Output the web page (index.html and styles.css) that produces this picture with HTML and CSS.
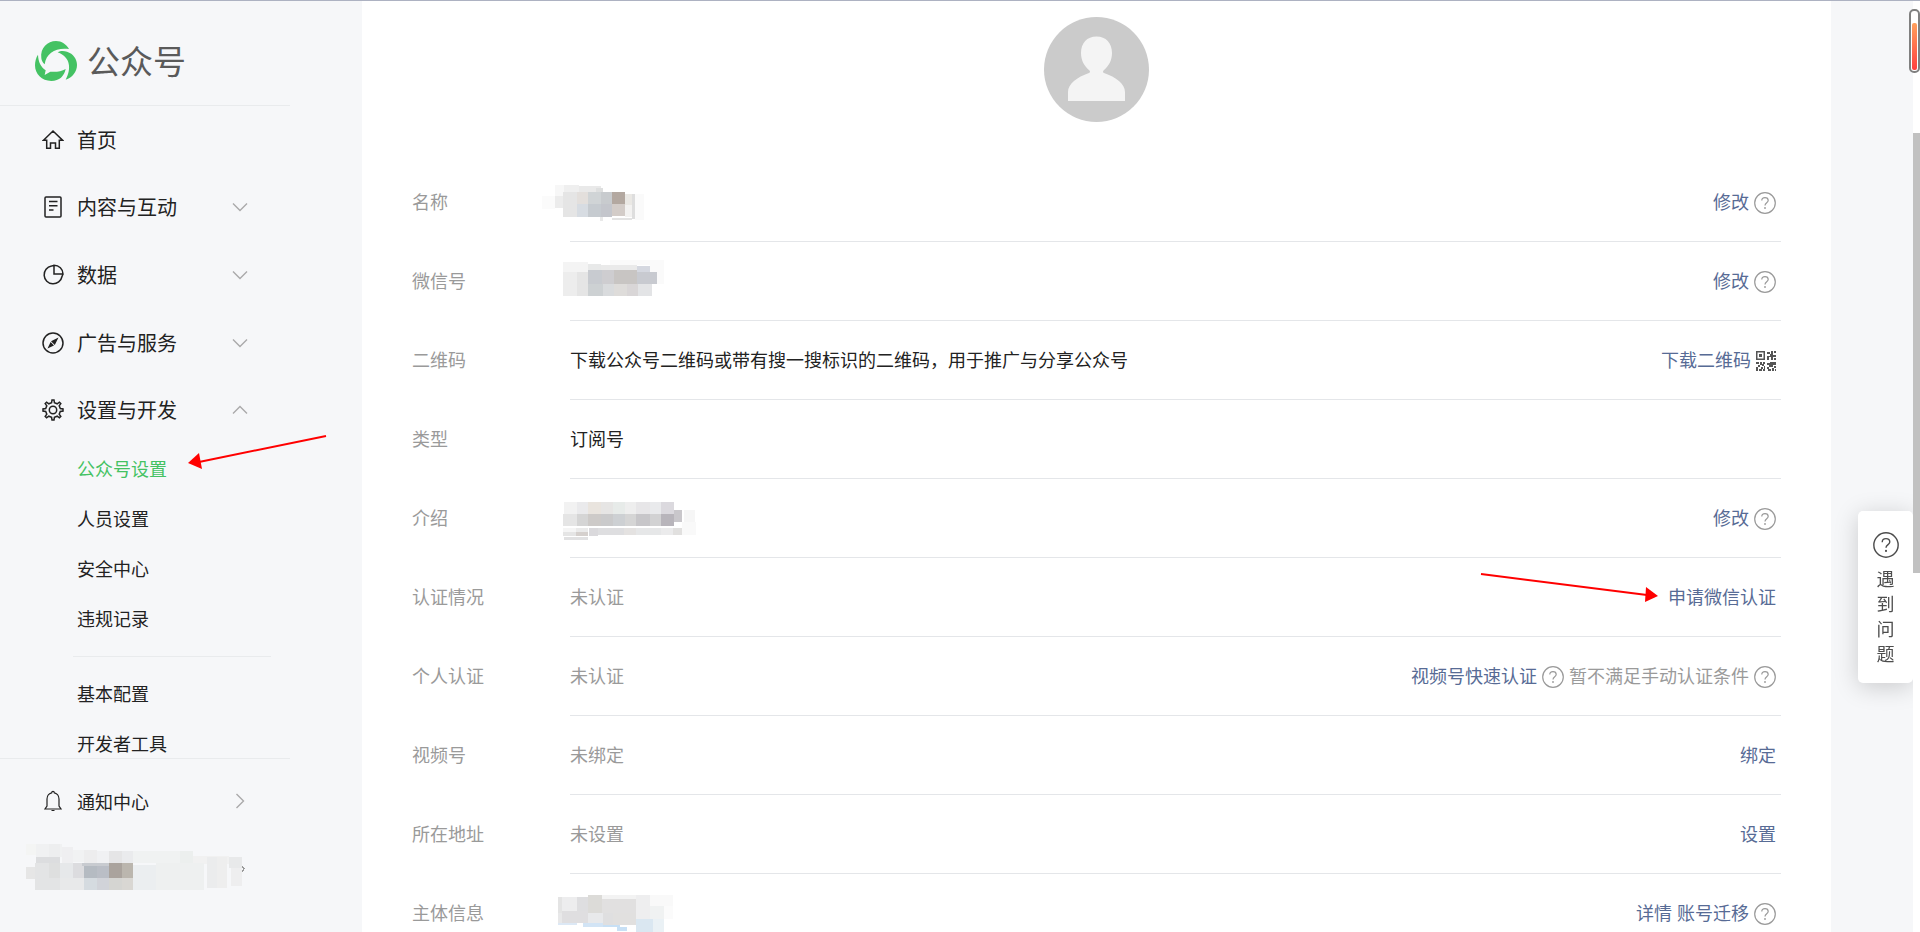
FILE: index.html
```html
<!DOCTYPE html>
<html lang="zh-CN">
<head>
    <meta charset="UTF-8">
    <meta name="viewport" content="width=device-width, initial-scale=1.0">
    <title>公众号</title>
    <link rel="stylesheet" href="styles.css">
</head>
<body>
    <svg class="sprite" aria-hidden="true">
        <symbol id="icon-help" viewBox="0 0 22 22">
            <circle cx="11" cy="11" r="10.3" fill="none" stroke="currentColor" stroke-width="1.2"/>
            <path d="M7.8 8.6C7.8 4.6 14.2 4.7 14.2 8.5C14.2 10.7 11 10.7 11 13.4" fill="none" stroke="currentColor" stroke-width="1.2"/>
            <circle cx="11" cy="16" r="0.9" fill="currentColor"/>
        </symbol>
        <symbol id="icon-arrow" viewBox="0 0 16 16">
            <path d="M1 4.500L8 11.500L15 4.500" fill="none" stroke="currentColor" stroke-width="1.4"/>
        </symbol>
    </svg>

    <aside class="sidebar">
        <div class="logo">
            <svg class="logo-icon" viewBox="105 123 126 120" fill="#44c263">
                <path d="M124 175C120 143 143 123 168 123C185 123 199 133 207 147C168 142 139 158 134 193C128 188 125 182 124 175Z"/>
                <path d="M173 157C181 152 191 152 201 155C220 161 231 177 231 195C231 215 217 233 197 239C214 208 213 172 173 157Z"/>
                <path d="M114 164C115 186 122 200 137 211L134 225L151 215C168 217 184 214 197 207C193 228 178 243 154 243C125 243 105 222 105 196C105 184 108 173 114 164Z"/>
            </svg>
            <span>公众号</span>
        </div>

        <nav class="nav">
            <div class="menu">
                <button class="menu-item">
                    <svg class="icon" viewBox="0 0 22 22"><path d="M1.500 11.200L11 2L20.500 11.200H17.300V19.300H13.500V14H8.500V19.300H4.700V11.200Z"/></svg>
                    <span>首页</span>
                </button>
                <button class="menu-item">
                    <svg class="icon" viewBox="0 0 22 22"><rect x="3" y="1" width="16" height="20" rx="1"/><path d="M7 5.500H15.500M7 9.700H15.500M7 14H11.500"/></svg>
                    <span>内容与互动</span>
                    <svg class="arrow"><use href="#icon-arrow"/></svg>
                </button>
                <button class="menu-item">
                    <svg class="icon" viewBox="0 0 22 22"><path d="M9.500 2A9 9 0 1 0 20 12.500M12 1.200V10H21C21 5 17 1.200 12 1.200ZM9.500 2L12 1.500M20 12.500L21 10"/></svg>
                    <span>数据</span>
                    <svg class="arrow"><use href="#icon-arrow"/></svg>
                </button>
                <button class="menu-item">
                    <svg class="icon" viewBox="0 0 22 22"><circle cx="11" cy="11" r="10"/><path d="M16.500 5.500L12.800 13L9 9.200ZM5.500 16.500L8.600 10L12 13.400Z" fill="#222" stroke="none"/></svg>
                    <span>广告与服务</span>
                    <svg class="arrow"><use href="#icon-arrow"/></svg>
                </button>
                <button class="menu-item">
                    <svg class="icon" viewBox="0 0 22 22"><circle cx="11" cy="11" r="3.700"/><path d="M9.600 3.700L10 1H12L12.400 3.700L15.200 4.800L17.400 3.200L18.800 4.600L17.200 6.800L18.300 9.600L21 10V12L18.300 12.400L17.200 15.200L18.800 17.400L17.400 18.800L15.200 17.200L12.400 18.300L12 21H10L9.600 18.300L6.800 17.200L4.600 18.800L3.200 17.400L4.800 15.200L3.700 12.400L1 12V10L3.700 9.600L4.800 6.800L3.200 4.600L4.600 3.200L6.800 4.800Z"/></svg>
                    <span>设置与开发</span>
                    <svg class="arrow up"><use href="#icon-arrow"/></svg>
                </button>
            </div>
            <ul class="submenu">
                <li><a href="#" class="active">公众号设置</a></li>
                <li><a href="#">人员设置</a></li>
                <li><a href="#">安全中心</a></li>
                <li><a href="#">违规记录</a></li>
            </ul>
            <hr>
            <ul class="submenu">
                <li><a href="#">基本配置</a></li>
                <li><a href="#">开发者工具</a></li>
            </ul>
        </nav>

        <div class="sidebar-footer">
            <button class="menu-item notice">
                <svg class="icon" viewBox="0 0 22 22"><path d="M3 19H19L17 16V9C17 5.500 14.500 3.200 12.300 2.800C12.300 1 9.700 1 9.700 2.800C7.500 3.200 5 5.500 5 9V16ZM9.500 20.500H12.500"/></svg>
                <span>通知中心</span>
                <svg class="arrow right"><use href="#icon-arrow"/></svg>
            </button>
            <!-- account name, masked -->
            <svg class="account" viewBox="78 666 663 147" shape-rendering="crispEdges">
                <path d="M726 736L733 743L726 751" fill="none" stroke="#999" stroke-width="4"/>
                <path d="M78 669H108V703H78Z" fill="#f4f5f4"/>
                <path d="M108 669H186V709H108Z" fill="#f0f1f2"/>
                <path d="M148 669H180V709H148Z" fill="#edeeef"/>
                <path d="M186 678H219V726H186Z" fill="#efeff1"/>
                <path d="M219 688H252V724H219Z" fill="#f1f2f3"/>
                <path d="M252 687H292V726H252Z" fill="#ededee"/>
                <path d="M292 690H327V726H292Z" fill="#f0f1f3"/>
                <path d="M327 690H366V727H327Z" fill="#e5e5e6"/>
                <path d="M366 690H399V727H366Z" fill="#eaebed"/>
                <path d="M399 690H540V727H399Z" fill="#f0f2f2"/>
                <path d="M540 690H579V727H540Z" fill="#ecefee"/>
                <path d="M579 706H687V730H579Z" fill="#f1f1f1"/>
                <path d="M78 738H108V774H78Z" fill="#e6e6e6"/>
                <path d="M108 709H180V727H108Z" fill="#dcdddf"/>
                <path d="M104 727H180V806H104Z" fill="#e3e4e5"/>
                <path d="M148 727H180V770H148Z" fill="#dedfdf"/>
                <path d="M180 727H219V770H180Z" fill="#e6e8ea"/>
                <path d="M219 727H252V770H219Z" fill="#dcdcdf"/>
                <path d="M180 770H252V806H180Z" fill="#e8e9ea"/>
                <path d="M245 727H327V735H245Z" fill="#c8cbd0"/>
                <path d="M252 735H292V770H252Z" fill="#b5bbc2"/>
                <path d="M292 735H327V770H292Z" fill="#babec6"/>
                <path d="M252 770H292V808H252Z" fill="#d5dbe0"/>
                <path d="M292 770H327V808H292Z" fill="#d1d3d9"/>
                <path d="M327 727H366V770H327Z" fill="#aaa39d"/>
                <path d="M366 727H399V770H366Z" fill="#bbb6ae"/>
                <path d="M327 770H366V806H327Z" fill="#d5d5d2"/>
                <path d="M366 770H399V806H366Z" fill="#d9d7d3"/>
                <path d="M399 733H468V806H399Z" fill="#ebeef0"/>
                <path d="M468 727H612V806H468Z" fill="#eef0f0"/>
                <path d="M620 709H651V800H620Z" fill="#ebeced"/>
                <path d="M651 709H681V800H651Z" fill="#eeeeee"/>
                <path d="M687 709H726V740H687Z" fill="#e8e9ea"/>
                <path d="M693 740H726V796H693Z" fill="#eeeeef"/>
            </svg>
        </div>

        <svg class="pointer pointer-menu" viewBox="0 0 142 38">
            <path d="M139 2L12 28" stroke="#f00" stroke-width="2"/>
            <path d="M1 29L12 19L15 35Z" fill="#f00"/>
        </svg>
    </aside>

    <main class="main">
        <div class="panel">
            <svg class="avatar" viewBox="0 0 105 105">
                <circle cx="52.500" cy="52.500" r="52.500" fill="#cbcbcb"/>
                <path d="M52.500 19.500C62 19.500 68 26 68 36C68 43 65 49 59.500 53.500C58.500 55 59 55.500 60 56C72 60 81 67 81 75V84H24V75C24 67 33 60 45 56C46 55.500 46.500 55 45.500 53.500C40 49 37 43 37 36C37 26 43 19.500 52.500 19.500Z" fill="#f4f4f4"/>
            </svg>

            <ul class="settings">
                <li class="row">
                    <span class="label">名称</span>
                    <div class="content">
                        <svg class="mosaic" viewBox="486 54 480 144" shape-rendering="crispEdges">
                            <path d="M486 111H525V150H486Z" fill="#fbfbfb"/>
                            <path d="M525 77H552V111H525Z" fill="#f7f7f7"/>
                            <path d="M525 111H549V148H525Z" fill="#ececec"/>
                            <path d="M552 77H597V99H552Z" fill="#efefef"/>
                            <path d="M597 81H663V99H597Z" fill="#e9e9e9"/>
                            <path d="M648 87H669V99H648Z" fill="#dedfdf"/>
                            <path d="M549 99H591V174H549Z" fill="#e5e5e5"/>
                            <path d="M591 99H624V136H591Z" fill="#e3dfdc"/>
                            <path d="M591 136H624V174H591Z" fill="#d7dce2"/>
                            <path d="M624 99H663V136H624Z" fill="#d0d4d6"/>
                            <path d="M624 136H663V174H624Z" fill="#c6cbd0"/>
                            <path d="M663 99H696V136H663Z" fill="#c8cbce"/>
                            <path d="M663 136H696V174H663Z" fill="#c4c6cc"/>
                            <path d="M660 174H668V186H660Z" fill="#e9e9e9"/>
                            <path d="M696 99H735V136H696Z" fill="#b3a8a0"/>
                            <path d="M696 136H735V171H696Z" fill="#d3ccc8"/>
                            <path d="M735 106H756V138H735Z" fill="#eae8e4"/>
                            <path d="M735 138H756V174H735Z" fill="#f3f2f1"/>
                            <path d="M756 106H765V180H756Z" fill="#dedede"/>
                            <path d="M696 177H756V182H696Z" fill="#e3e3e3"/>
                            <path d="M765 106H792V182H765Z" fill="#fafafa"/>
                        </svg>
                    </div>
                    <div class="actions"><a href="#">修改</a><svg class="help"><use href="#icon-help"/></svg></div>
                </li>
                <li class="row">
                    <span class="label">微信号</span>
                    <div class="content">
                        <svg class="mosaic" viewBox="486 291 480 144" shape-rendering="crispEdges">
                            <path d="M549 309H624V339H549Z" fill="#f4f4f4"/>
                            <path d="M549 339H591V412H549Z" fill="#ededed"/>
                            <path d="M591 339H624V412H591Z" fill="#e5e5e5"/>
                            <path d="M624 315H663V333H624Z" fill="#e8e9e9"/>
                            <path d="M663 318H771V333H663Z" fill="#eaeaea"/>
                            <path d="M690 303H852V318H690Z" fill="#fafafa"/>
                            <path d="M810 318H852V376H810Z" fill="#fafafa"/>
                            <path d="M771 322H810V339H771Z" fill="#d5d8e0"/>
                            <path d="M624 333H666V376H624Z" fill="#c8cbd0"/>
                            <path d="M624 376H669V411H624Z" fill="#cdd1d3"/>
                            <path d="M666 333H702V376H666Z" fill="#cecdd0"/>
                            <path d="M669 376H702V412H669Z" fill="#d9dbdd"/>
                            <path d="M702 333H771V376H702Z" fill="#c8c5c3"/>
                            <path d="M702 376H741V411H702Z" fill="#dedcda"/>
                            <path d="M741 376H774V411H741Z" fill="#d9d6d7"/>
                            <path d="M771 339H831V376H771Z" fill="#c8cad0"/>
                            <path d="M774 376H816V412H774Z" fill="#e3e4e6"/>
                        </svg>
                    </div>
                    <div class="actions"><a href="#">修改</a><svg class="help"><use href="#icon-help"/></svg></div>
                </li>
                <li class="row">
                    <span class="label">二维码</span>
                    <div class="content">下载公众号二维码或带有搜一搜标识的二维码，用于推广与分享公众号</div>
                    <div class="actions">
                        <a href="#">下载二维码</a>
                        <svg class="qr" viewBox="0 0 20 20" fill="#555">
                            <path d="M0 0H9V9H0ZM1.500 1.500V7.500H7.500V1.500Z" fill-rule="evenodd"/>
                            <path d="M3 3H6V6H3ZM11 1H14V3H11ZM15 0H17V4H20V6H17V9H15V6H13V9H11V5H14V3H15ZM18 0H20V2H18ZM18 7H20V9H18ZM0 11H3V13H0ZM4 11H6V14H4ZM7 11H9V13H7ZM2 14H4V16H2ZM6 13H8V15H6ZM0 16H2V20H0ZM3 18H6V20H3ZM5 16H7V18H5ZM8 15H9V20H7V18H8ZM11 12H14V14H11ZM14 11H20V14H17V16H13V14H14ZM11 16H13V18H11ZM12 18H15V20H12ZM16 17H18V20H16ZM18 15H20V17H18ZM19 18H20V20H19Z"/>
                        </svg>
                    </div>
                </li>
                <li class="row">
                    <span class="label">类型</span>
                    <div class="content">订阅号</div>
                </li>
                <li class="row">
                    <span class="label">介绍</span>
                    <div class="content">
                        <svg class="mosaic" viewBox="486 72 480 144" shape-rendering="crispEdges">
                            <path d="M552 99H591V136H552Z" fill="#f2f2f2"/>
                            <path d="M591 99H624V136H591Z" fill="#eaeaec"/>
                            <path d="M624 99H663V136H624Z" fill="#e9e4de"/>
                            <path d="M663 99H699V136H663Z" fill="#e6e5e4"/>
                            <path d="M699 99H735V136H699Z" fill="#e7ebe9"/>
                            <path d="M735 99H768V136H735Z" fill="#eeeeee"/>
                            <path d="M768 99H810V136H768Z" fill="#e7e6e8"/>
                            <path d="M810 99H843V136H810Z" fill="#e9eaec"/>
                            <path d="M843 99H882V136H843Z" fill="#dbd9de"/>
                            <path d="M549 136H591V171H549Z" fill="#e5e5e5"/>
                            <path d="M591 136H624V171H591Z" fill="#d5d5d5"/>
                            <path d="M624 136H663V171H624Z" fill="#cdcac8"/>
                            <path d="M663 136H699V171H663Z" fill="#cacacb"/>
                            <path d="M699 136H735V171H699Z" fill="#cdd0d3"/>
                            <path d="M735 136H768V171H735Z" fill="#d5d5d5"/>
                            <path d="M768 136H810V171H768Z" fill="#c7c6c9"/>
                            <path d="M810 136H843V171H810Z" fill="#d2d2d3"/>
                            <path d="M843 136H882V171H843Z" fill="#b8b5bb"/>
                            <path d="M882 123H906V160H882Z" fill="#c9c7cb"/>
                            <path d="M912 123H945V160H912Z" fill="#f6f6f6"/>
                            <path d="M549 178H588V188H549Z" fill="#f5f5f5"/>
                            <path d="M549 189H588V202H549Z" fill="#e5e5e5"/>
                            <path d="M588 178H624V189H588Z" fill="#eaeaea"/>
                            <path d="M588 189H624V202H588Z" fill="#d5d0cd"/>
                            <path d="M552 204H624V214H552Z" fill="#e1e1e2"/>
                            <path d="M627 177H654V201H627Z" fill="#dad9dc"/>
                            <path d="M654 177H732V197H654Z" fill="#dedee0"/>
                            <path d="M732 177H768V197H732Z" fill="#e4e2e1"/>
                            <path d="M768 177H843V197H768Z" fill="#e6e7e8"/>
                            <path d="M843 177H879V197H843Z" fill="#ebebec"/>
                            <path d="M879 177H906V197H879Z" fill="#e1e0df"/>
                            <path d="M906 160H948V198H906Z" fill="#f9f9f9"/>
                        </svg>
                    </div>
                    <div class="actions"><a href="#">修改</a><svg class="help"><use href="#icon-help"/></svg></div>
                </li>
                <li class="row">
                    <span class="label">认证情况</span>
                    <div class="content muted">未认证</div>
                    <div class="actions"><a href="#">申请微信认证</a></div>
                    <svg class="pointer pointer-verify" viewBox="0 0 180 32">
                        <path d="M2 2L168 23" stroke="#f00" stroke-width="2"/>
                        <path d="M179 24L167 15L166 30Z" fill="#f00"/>
                    </svg>
                </li>
                <li class="row">
                    <span class="label">个人认证</span>
                    <div class="content muted">未认证</div>
                    <div class="actions">
                        <a href="#">视频号快速认证</a>
                        <svg class="help"><use href="#icon-help"/></svg>
                        <span class="muted">暂不满足手动认证条件</span>
                        <svg class="help"><use href="#icon-help"/></svg>
                    </div>
                </li>
                <li class="row">
                    <span class="label">视频号</span>
                    <div class="content muted">未绑定</div>
                    <div class="actions"><a href="#">绑定</a></div>
                </li>
                <li class="row">
                    <span class="label">所在地址</span>
                    <div class="content muted">未设置</div>
                    <div class="actions"><a href="#">设置</a></div>
                </li>
                <li class="row">
                    <span class="label">主体信息</span>
                    <div class="content">
                        <svg class="mosaic" viewBox="486 327 480 144" shape-rendering="crispEdges">
                            <path d="M534 354H591V396H534Z" fill="#ededee"/>
                            <path d="M534 354H546V402H534Z" fill="#e4e4e4"/>
                            <path d="M591 354H624V396H591Z" fill="#dedee0"/>
                            <path d="M546 396H624V433H546Z" fill="#dfdee0"/>
                            <path d="M534 402H546V433H534Z" fill="#e8e8e9"/>
                            <path d="M534 433H591V438H534Z" fill="#dce8f5"/>
                            <path d="M624 348H666V402H624Z" fill="#dcdbd8"/>
                            <path d="M624 402H669V433H624Z" fill="#e8e9eb"/>
                            <path d="M608 433H669V444H608Z" fill="#d2e4f5"/>
                            <path d="M666 348H768V360H666Z" fill="#f3f3f3"/>
                            <path d="M666 360H768V402H666Z" fill="#e1e0e0"/>
                            <path d="M669 402H699V438H669Z" fill="#dfdfe0"/>
                            <path d="M699 402H768V438H699Z" fill="#e1e0df"/>
                            <path d="M669 438H720V444H669Z" fill="#c8e0f5"/>
                            <path d="M711 444H740V456H711Z" fill="#c8e0f5"/>
                            <path d="M768 348H810V420H768Z" fill="#eeeeef"/>
                            <path d="M810 348H880V380H810Z" fill="#f9f9f9"/>
                            <path d="M810 380H852V420H810Z" fill="#f0f2f2"/>
                            <path d="M852 380H878V420H852Z" fill="#fbfbfb"/>
                            <path d="M768 420H819V471H768Z" fill="#dae7f1"/>
                            <path d="M819 420H852V471H819Z" fill="#eaf1f5"/>
                        </svg>
                    </div>
                    <div class="actions"><a href="#">详情</a><a href="#">账号迁移</a><svg class="help"><use href="#icon-help"/></svg></div>
                </li>
            </ul>
        </div>
    </main>

    <button class="feedback">
        <svg class="feedback-icon"><use href="#icon-help"/></svg>
        <span>遇到问题</span>
    </button>

    <div class="scrollbar"><div class="thumb"></div></div>
    <div class="gauge"><div class="gauge-level"></div></div>
</body>
</html>
```
FILE: styles.css
```css
* {
    box-sizing: border-box;
}
body {
    display: flex;
    height: 100vh;
    margin: 0;
    overflow: hidden;
    border-top: 1px solid #adb2c2;
    background-color: #f6f7f9;
    color: #222;
    font-family: "Noto Sans CJK SC", sans-serif;
    font-size: 18px;
    font-weight: 400;
    line-height: 24px;
}
a {
    color: #576b95;
    text-decoration: none;
}
ul {
    margin: 0;
    padding: 0;
    list-style: none;
}
button {
    padding: 0;
    border: none;
    background: none;
    color: inherit;
    font: inherit;
    cursor: pointer;
}
svg {
    display: block;
    flex-shrink: 0;
}
.sprite {
    position: absolute;
    width: 0;
    height: 0;
}

/* sidebar */
.sidebar {
    position: relative;
    display: flex;
    flex-direction: column;
    flex-shrink: 0;
    width: 290px;
}
.logo {
    display: flex;
    align-items: center;
    gap: 10px;
    height: 105px;
    padding: 16px 0 0 35px;
    border-bottom: 1px solid #e9ebed;
    color: #5a5a5a;
    font-size: 33px;
    line-height: 40px;
}
.logo span {
    padding-bottom: 3px;
}
.logo-icon {
    width: 42px;
    height: 40px;
}
.nav {
    flex: 1;
    min-height: 0;
    overflow: hidden;
}
.menu {
    display: grid;
    grid-auto-rows: 1fr;
    height: 338px;
}
.menu-item {
    display: flex;
    align-items: center;
    width: 100%;
    padding: 0 42px;
    font-size: 20px;
    text-align: left;
}
.icon {
    width: 22px;
    height: 22px;
    margin-right: 13px;
    fill: none;
    stroke: #222;
    stroke-width: 1.5;
}
.arrow {
    width: 16px;
    height: 16px;
    margin-left: auto;
    color: #aaa;
}
.arrow.up {
    transform: rotate(180deg);
}
.arrow.right {
    transform: rotate(-90deg);
}
.submenu a {
    display: block;
    padding: 0 0 2px 77px;
    color: #222;
    line-height: 48px;
}
.submenu a.active {
    color: #44c263;
}
.nav hr {
    height: 1px;
    margin: 12px 19px 12px 73px;
    border: none;
    background-color: #e9ebed;
}
.sidebar-footer {
    height: 174px;
    border-top: 1px solid #e9ebed;
}
.notice {
    height: 84px;
    padding-bottom: 1px;
    font-size: 18px;
}
.notice .icon {
    stroke-width: 1.2;
}
.account {
    width: 221px;
    height: 49px;
    margin-left: 26px;
}

/* account settings */
.main {
    flex: 1;
    min-width: 0;
    padding: 0 89px 0 72px;
}
.panel {
    height: 100%;
    padding: 16px 50px 0;
    overflow: hidden;
    background-color: #fff;
}
.avatar {
    width: 105px;
    height: 105px;
    margin: 0 auto 41px;
}
.row {
    position: relative;
    display: flex;
    align-items: center;
    height: 79px;
    padding-bottom: 3px;
}
.row::after {
    content: "";
    position: absolute;
    right: 0;
    bottom: 0;
    left: 158px;
    height: 1px;
    background-color: #e4e6e9;
}
.label {
    width: 158px;
    color: #9a9a9a;
}
.content {
    flex: 1;
}
.muted {
    color: #9a9a9a;
}
.mosaic {
    width: 160px;
    height: 48px;
    margin-left: -28px;
}
.actions {
    display: flex;
    align-items: center;
    gap: 5px;
    padding-right: 5px;
}
.help,
.qr {
    width: 22px;
    height: 22px;
    margin-top: 4px;
    color: #9a9a9a;
}
.qr {
    width: 20px;
    height: 20px;
}

/* red pointers */
.pointer {
    position: absolute;
    z-index: 1;
}
.pointer-menu {
    top: 433px;
    left: 187px;
    width: 142px;
    height: 38px;
}
.pointer-verify {
    top: 14px;
    right: 122px;
    width: 180px;
    height: 32px;
}

/* floating help */
.feedback {
    position: fixed;
    top: 511px;
    right: 7px;
    display: flex;
    flex-direction: column;
    align-items: center;
    gap: 8px;
    width: 55px;
    height: 172px;
    padding-top: 21px;
    border-radius: 5px;
    background-color: #fff;
    box-shadow: 0 4px 24px rgba(0, 0, 0, 0.18);
    color: #4d4d4d;
}
.feedback-icon {
    width: 26px;
    height: 26px;
}
.feedback span {
    width: 18px;
    line-height: 25px;
}
.scrollbar {
    position: fixed;
    top: 1px;
    right: 0;
    bottom: 0;
    width: 7px;
    background-color: #fff;
}
.thumb {
    height: 440px;
    margin-top: 132px;
    background-color: #c1c1c1;
}
.gauge {
    position: fixed;
    top: 9px;
    right: 0;
    width: 11px;
    height: 64px;
    padding: 12px 1px 1px;
    border: 2px solid #808080;
    border-radius: 5px;
    background-color: #fff;
}
.gauge-level {
    height: 100%;
    border-radius: 2px;
    background: linear-gradient(#ffa05c, #ff4040);
}
```
